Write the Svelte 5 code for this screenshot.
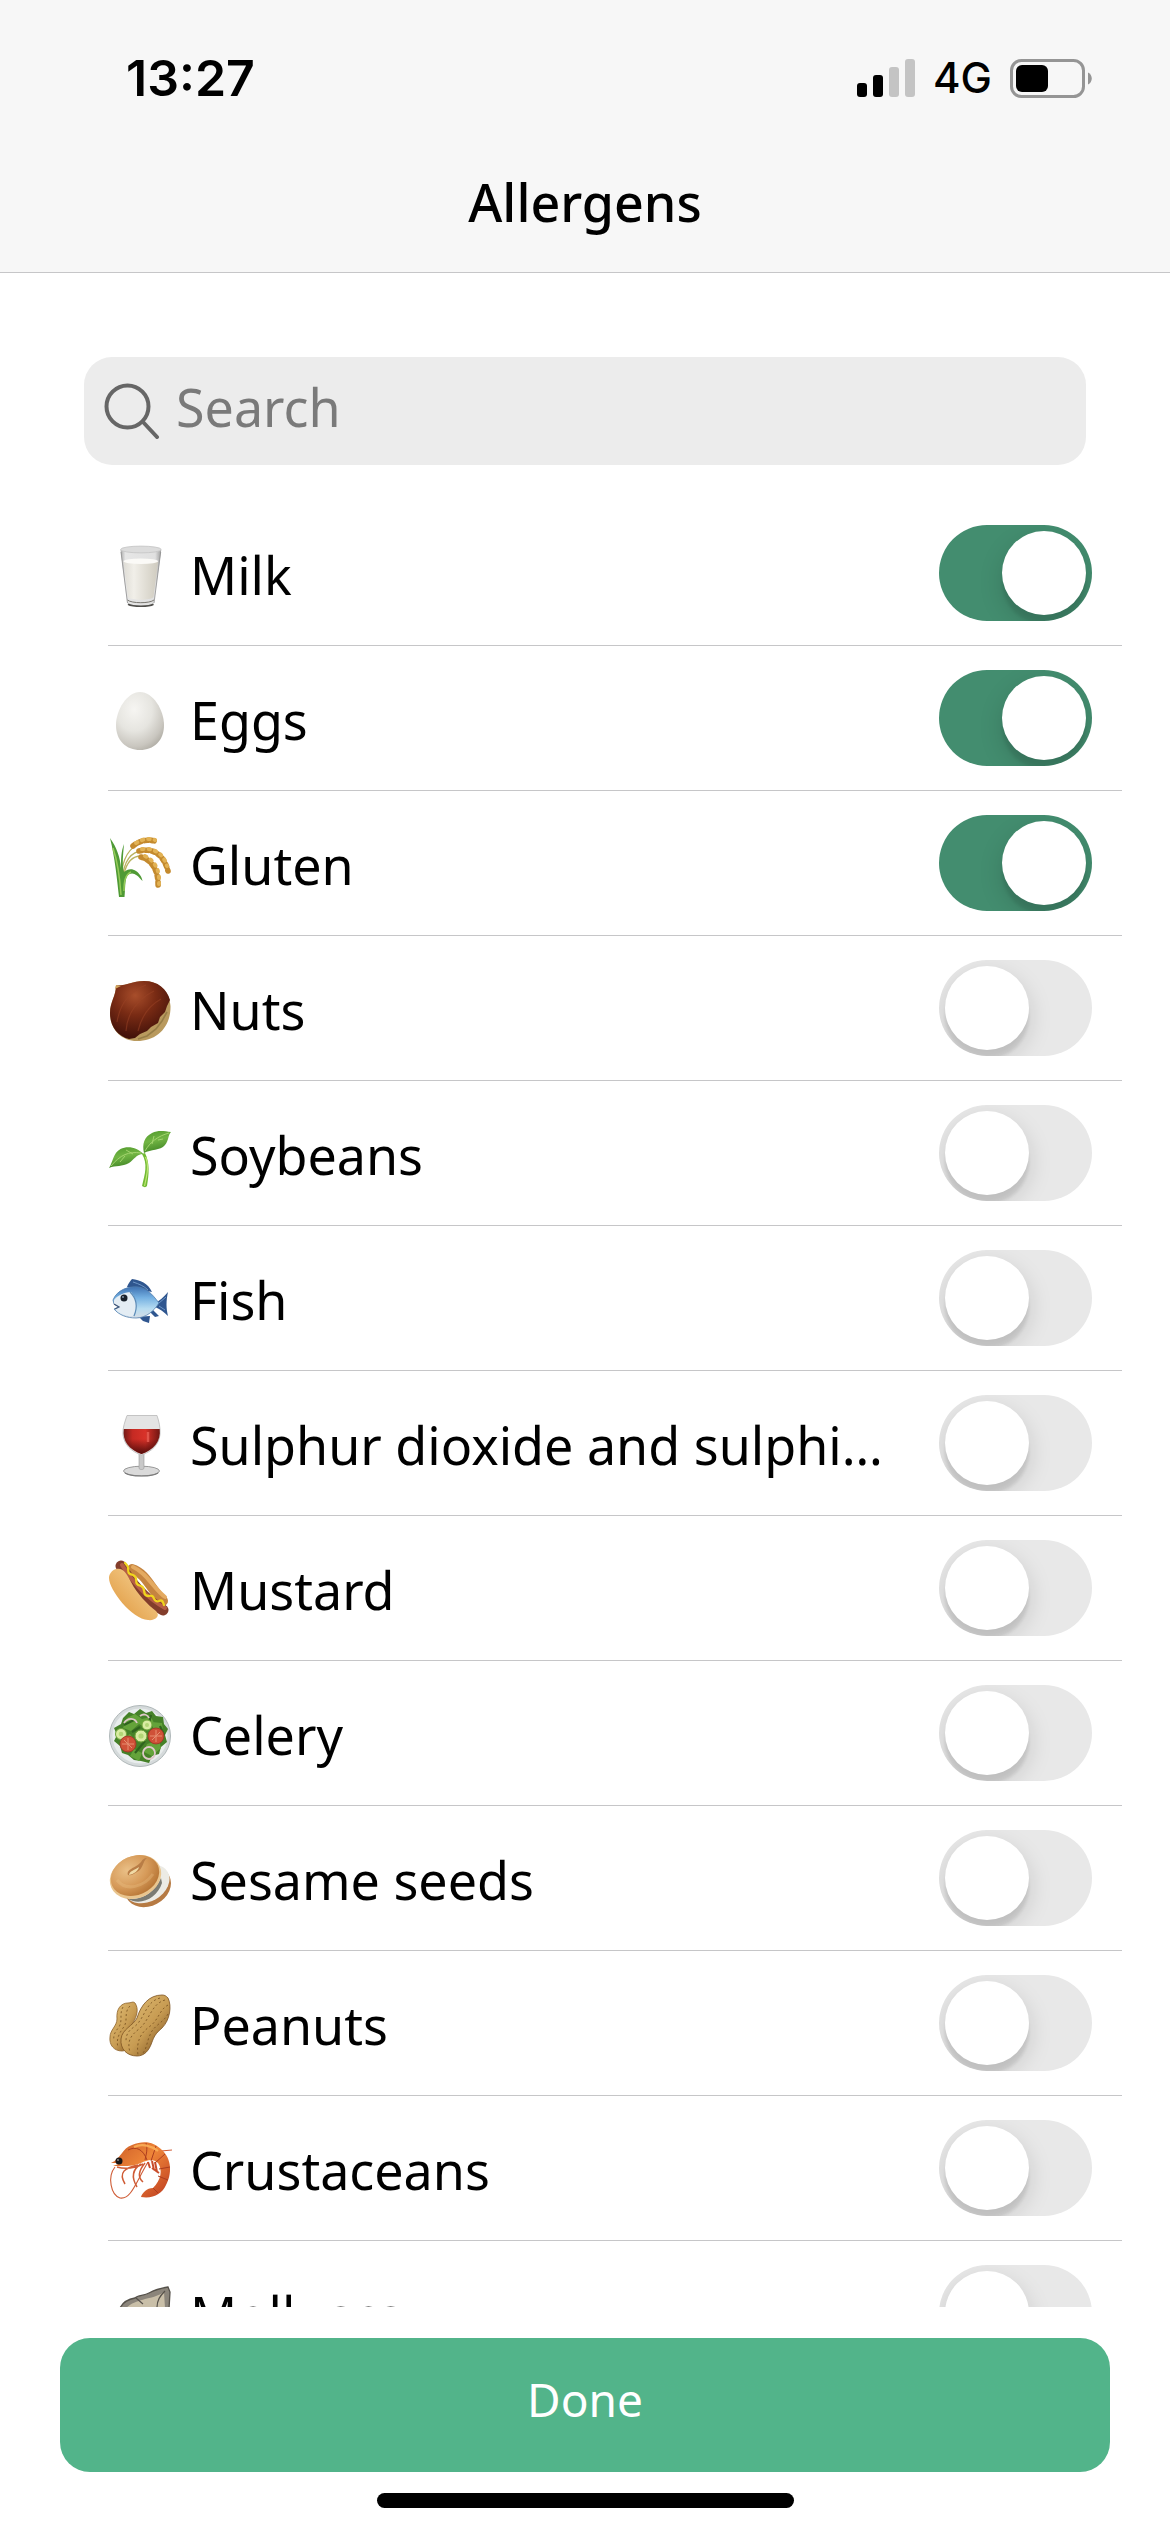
<script>
  let query = $state('');
  let allergens = $state([
    { id: 'milk', name: 'Milk', on: true },
    { id: 'eggs', name: 'Eggs', on: true },
    { id: 'gluten', name: 'Gluten', on: true },
    { id: 'nuts', name: 'Nuts', on: false },
    { id: 'soybeans', name: 'Soybeans', on: false },
    { id: 'fish', name: 'Fish', on: false },
    { id: 'sulphites', name: 'Sulphur dioxide and sulphites', on: false },
    { id: 'mustard', name: 'Mustard', on: false },
    { id: 'celery', name: 'Celery', on: false },
    { id: 'sesame', name: 'Sesame seeds', on: false },
    { id: 'peanuts', name: 'Peanuts', on: false },
    { id: 'crustaceans', name: 'Crustaceans', on: false },
    { id: 'molluscs', name: 'Molluscs', on: false }
  ]);
  let shown = $derived(
    allergens.filter((a) => a.name.toLowerCase().includes(query.trim().toLowerCase()))
  );
</script>

{#snippet picture(id)}
  <svg class="picture" viewBox="0 0 64 64" aria-hidden="true">
    {#if id === 'milk'}
      <defs>
        <linearGradient id="milk-glass" x1="0" x2="1">
          <stop offset="0" stop-color="#a9a9a9" /><stop offset=".12" stop-color="#e6e6e6" />
          <stop offset=".85" stop-color="#e0e0e0" /><stop offset="1" stop-color="#9d9d9d" />
        </linearGradient>
        <linearGradient id="milk-fill" x1="0" x2="1">
          <stop offset="0" stop-color="#dedcd5" /><stop offset=".3" stop-color="#f1efe9" />
          <stop offset="1" stop-color="#cfcbbf" />
        </linearGradient>
      </defs>
      <path d="M12.5 5.5 19 58.5c.6 5.2 26.4 5.2 27 0L53.3 5.5Z" fill="url(#milk-glass)" />
      <path d="M15.5 17.5 20 53c3 3.6 22.500 3.600 25.500 0l4.600-35.500Z" fill="url(#milk-fill)" />
      <ellipse cx="32.800" cy="17.300" rx="17.300" ry="2.800" fill="#fbfaf7" />
      <ellipse cx="32.900" cy="5.500" rx="20.300" ry="3.400" fill="#dcdcdc" stroke="#c4c4c4" stroke-width=".8" />
      <path d="M19.500 56c4 3.600 22.500 3.600 26.500 0" fill="none" stroke="#77756f" stroke-width="1" />
      <path d="M20 60.300c5 2.600 21 2.600 25.500 0" fill="none" stroke="#4f4e4b" stroke-width="1.600" />
      <path d="m13 8 6.500 51M52.700 8 46 59" stroke="#8e8e8e" stroke-width=".8" />
    {:else if id === 'eggs'}
      <defs>
        <radialGradient id="egg-shell" cx=".38" cy=".3" r=".75">
          <stop offset="0" stop-color="#f6f5f2" /><stop offset=".5" stop-color="#e6e5e0" />
          <stop offset=".85" stop-color="#c9c6bf" /><stop offset="1" stop-color="#b3b0a8" />
        </radialGradient>
      </defs>
      <path d="M32 3c13 0 24 18 24 33 0 16-10.500 25-24 25S8 52 8 36C8 21 19 3 32 3Z" fill="url(#egg-shell)" />
    {:else if id === 'gluten'}
      <g fill="none" stroke="#b9b25e" stroke-width="1.300">
        <path d="M13 42C15 24 22 13 32 10" /><path d="M15 45c0-17 8-28 20-28" /><path d="M16 40c3-13 9-18 17-18" />
      </g>
      <path d="M11 63C9 45 7 24 2 4c7 10 10 19 11 30 0-9 0-16 3-24-1 12-2 20 0 28 3-3 8-4 12-1 3 2 6 6 6.500 10-5-6-9-9-13-7-5 2-4 12-5 23Z" fill="#4f9a35" />
      <path d="M13 61C12 46 10 29 5 14M16 57c0-10 1-16 7-19" fill="none" stroke="#95ca59" stroke-width="1.500" />
      <g fill="none" stroke-linecap="round" stroke-width="5.600">
        <g stroke="#c48a2e" stroke-dasharray="3 3.500">
          <path d="M25 12c6-5 14-7 22-5" /><path d="M31 17c13-3 24 2 29 20" /><path d="M33 23c11 3 18 14 17 31" />
        </g>
        <g stroke="#e2b254" stroke-dasharray="1.500 5" stroke-width="4">
          <path d="M28 9c6-4 12-5 19-3" /><path d="M34 15c12-1 21 4 25 17" /><path d="M37 22c10 5 15 14 14 28" />
        </g>
      </g>
    {:else if id === 'nuts'}
      <defs>
        <radialGradient id="nut-shell" cx=".42" cy=".25" r=".75">
          <stop offset="0" stop-color="#a84e2b" /><stop offset=".45" stop-color="#792b14" />
          <stop offset="1" stop-color="#3f1009" />
        </radialGradient>
      </defs>
      <path d="M8 6.500C20 7 23 2 36 2c15 0 26 11 26.500 25C63 48 49 62 29 62 13 62 2 50 2 34 2 23 8 17 8 6.500Z" fill="#b99a5e" />
      <path d="M8 6.500C20 7 23 2 36 2c14 0 23 8 26 19l-3 6-2 6-5 5-2 6-7 4-4 4-7 3-5 4-6 1C9 57 2 47 2 34 2 23 8 17 8 6.500Z" fill="url(#nut-shell)" />
      <path d="M9 43C12 25 22 12 38 6M18 52C19 34 30 20 46 12M30 52c4-17 12-26 23-32" fill="none" stroke="#9b4326" stroke-width="1.200" opacity=".5" />
      <path d="m30 60 9-3 9-7 6-8 5-9" fill="none" stroke="#806a38" stroke-width="1.600" opacity=".6" />
      <path d="m7 10 1-4 5 1Z" fill="#d0a45f" />
    {:else if id === 'soybeans'}
      <defs>
        <linearGradient id="leaf" x1="0" y1="0" x2=".3" y2="1">
          <stop offset="0" stop-color="#4f982b" /><stop offset=".5" stop-color="#72b544" />
          <stop offset="1" stop-color="#438827" />
        </linearGradient>
      </defs>
      <path d="M34 30c6 10 3 20 0 32 2 1.500 4 1.500 5 0 2-12 3-23-2-33Z" fill="#72ba35" />
      <path d="M37.500 33c4 9 1 20-1 29" fill="none" stroke="#bde773" stroke-width="1.200" />
      <path d="M36 29c-2-9 0-16 8-20 6-3 12-2 19-1-3 3-2 8-6 13-5 6-14 4-21 8Z" fill="url(#leaf)" />
      <path d="M35.500 30c-6-6-15-9-23-5C5 29 5 38 1 44c7-3 13-1 20-5 5-3 7-9 14.500-9Z" fill="url(#leaf)" />
      <path d="M37 27c5-9 13-15 24-18M33 29c-12-2-21 2-30 13M44 20l2-8M50 16l5-1M25 30l-7-4M17 32l-5 6" fill="none" stroke="#a3d46e" stroke-width="1" />
    {:else if id === 'fish'}
      <defs>
        <linearGradient id="fish-body" x1="0" y1="0" x2="0" y2="1">
          <stop offset="0" stop-color="#3f72b2" /><stop offset=".35" stop-color="#75b1e2" />
          <stop offset=".7" stop-color="#b7dcf1" /><stop offset="1" stop-color="#d5dde5" />
        </linearGradient>
      </defs>
      <path d="M19 18c1-3 3-6 5-8 8 1 16 4 20 13ZM47 34c4-2 9-6 13-11-2 9-2 16 0 24-4-4-8-7-13-9ZM27 48l5 1 3 3 6 2 1-7ZM42 43l3-2 6 6-4 1Z" fill="#2f568f" />
      <path d="M5 31C9 21 20 17 30 18c9 1 14 7 21 16-5 8-13 15-23 15-9 0-17-3-22-9l5-2-5-3Z" fill="url(#fish-body)" stroke="#527fae" stroke-width=".8" />
      <path d="M6 31c3-4 10-8 17-8 7 9 7 18 2 24-7 1-15-3-18-7l5-2-6-3Z" fill="#e4edf4" />
      <path d="M22 23c8 8 7 17 4 24" fill="none" stroke="#5c8cb8" stroke-width="1.200" />
      <path d="m6 35 5 3-4 2" fill="none" stroke="#415779" stroke-width="1.200" />
      <path d="M25 13c6 2 11 4 15 8M51 34l7-6M51 37l6 4" fill="none" stroke="#6f97c7" stroke-width="1" />
      <circle cx="16" cy="29" r="3.500" fill="#18202a" /><circle cx="15" cy="28" r=".9" fill="#8da0b6" />
    {:else if id === 'sulphites'}
      <defs>
        <linearGradient id="wine" x1="0" x2="1">
          <stop offset="0" stop-color="#731a16" /><stop offset=".25" stop-color="#c52a23" />
          <stop offset=".6" stop-color="#d93229" /><stop offset="1" stop-color="#6f1511" />
        </linearGradient>
        <linearGradient id="wine-shade" x1="0" y1="0" x2="0" y2="1">
          <stop offset=".4" stop-color="#3a0505" stop-opacity="0" /><stop offset="1" stop-color="#3a0505" stop-opacity=".85" />
        </linearGradient>
      </defs>
      <ellipse cx="33.500" cy="57" rx="18" ry="4.800" fill="#dadada" stroke="#909090" stroke-width=".9" />
      <path d="M17 59c5 4 28 4 33 0" fill="none" stroke="#7c7c7c" stroke-width="1.200" />
      <path d="M31 38h5v16c0 2-5 2-5 0Z" fill="#c8c8c8" stroke="#999" stroke-width=".6" />
      <path d="M19 1.500h30c2 6 3.500 12 3 19-1 10-8 17-18.500 20.500C23 37.500 16 30.500 15 20.500c-.5-7 2-13 4-19Z" fill="#e4e4e4" stroke="#b9b9b9" stroke-width=".8" />
      <path d="M15.800 15h35.900c1.500 12-6 21-18.200 25C21.500 36 14 27 15.800 15Z" fill="url(#wine)" />
      <path d="M15.800 15h35.900c1.500 12-6 21-18.200 25C21.500 36 14 27 15.800 15Z" fill="url(#wine-shade)" />
      <path d="M40 18v10" stroke="#ef665b" stroke-width="2.500" opacity=".7" />
    {:else if id === 'mustard'}
      <defs>
        <linearGradient id="bun" x1="0" y1="1" x2=".7" y2=".3">
          <stop offset="0" stop-color="#b9702b" /><stop offset=".45" stop-color="#e6a957" />
          <stop offset="1" stop-color="#f1c580" />
        </linearGradient>
      </defs>
      <path d="M24 10C38 14 44 32 55 42" fill="none" stroke="#c58440" stroke-width="10" stroke-linecap="round" />
      <path d="M25 8C39 14 46 30 57 38" fill="none" stroke="#e4aa60" stroke-width="4" stroke-linecap="round" />
      <path d="M13 7c8 15 25 35 42 44" fill="none" stroke="#833d2b" stroke-width="11" stroke-linecap="round" />
      <path d="M14 6c10 16 25 33 43 43" fill="none" stroke="#b65e45" stroke-width="4" stroke-linecap="round" />
      <path d="M8 10c7-2 11 5 15 13 6 12 17 23 25 29 5 5-1 10-8 9C24 60 1 31 1 19c0-4 3-8 7-9Z" fill="url(#bun)" />
      <path d="M17 4c7 6-1 10 8 12 7 3-1 9 8 11 6 2 0 10 8 10 7-2 3 7 10 5 4-2 4 2 5 4" fill="none" stroke="#f0d51e" stroke-width="2.300" stroke-linecap="round" />
    {:else if id === 'celery'}
      <circle cx="32" cy="32" r="30.500" fill="#d5dadb" stroke="#b0b8b9" />
      <circle cx="32" cy="32" r="27.500" fill="#e9eded" />
      <path d="m15 14 6-6 5 2 6-5 6 4 6-2 4 5 7 1 1 7 4 5-3 6 2 7-6 5-2 7-7 2-3 7-8-2-7-1-6-5-6-2-2-7-6-5 3-6-3-7 7-4Z" fill="#458128" />
      <path d="m19 14 8-4 7 5 9-2 4 8-7 4-9-5-8 7-8-3ZM12 36l10-6 6 8-6 8-8-2ZM39 40l12-4 2 8-9 8-8-4ZM26 45l8 4-3 8-9-5ZM44 18l10 1 1 8-9 2Z" fill="#64a33a" />
      <path d="m24 28 8-5M27 49l10-12M52 22l4 9M16 21l10-5M43 11l-2 8" fill="none" stroke="#2f631e" stroke-width="2.200" />
      <g fill="#d9eca3" stroke="#6ea43a" stroke-width="1">
        <circle cx="13" cy="30" r="5.500" /><circle cx="33" cy="32" r="6" /><circle cx="39" cy="21" r="5" />
      </g>
      <g fill="#b3d676"><circle cx="13" cy="30" r="2.300" /><circle cx="33" cy="32" r="2.600" /><circle cx="39" cy="21" r="2" /></g>
      <g fill="#cf5138" stroke="#9f3324" stroke-width=".8"><circle cx="20" cy="40" r="8" /><circle cx="48" cy="32" r="8" /></g>
      <path d="M20 34v12M14 40h12M16 36l8 8M48 26v12M42 32h12M44 36l8-8" stroke="#eea081" stroke-width="1" opacity=".8" />
      <g fill="none" stroke="#dec8c8" stroke-width="1.800">
        <circle cx="41" cy="49" r="6" /><path d="M16 19c4-6 11-5 13 0M32 12c4-3 8-1 9 2" />
      </g>
    {:else if id === 'sesame'}
      <defs>
        <radialGradient id="bagel" cx=".4" cy=".3" r=".7">
          <stop offset="0" stop-color="#eac087" /><stop offset=".6" stop-color="#d69a59" />
          <stop offset="1" stop-color="#b97838" />
        </radialGradient>
      </defs>
      <ellipse cx="40" cy="38" rx="24" ry="19" transform="rotate(-28 40 38)" fill="#b67a43" />
      <ellipse cx="39" cy="35" rx="24" ry="17.500" transform="rotate(-30 39 35)" fill="#ecebe5" />
      <path d="M17 49c16 4 30-6 36-20l1 5C50 47 37 55 25 52Z" fill="#4c4b43" opacity=".7" />
      <ellipse cx="27.500" cy="28" rx="26.500" ry="21" transform="rotate(-24 27.500 28)" fill="#e9c58e" />
      <ellipse cx="27" cy="26.500" rx="25" ry="19.500" transform="rotate(-24 27 26.500)" fill="url(#bagel)" />
      <path d="M20 26c-2-6 8-7 13-13 2-3 3-4 6-4-5 4-3 10-10 14-4 2-5 4-9 3Z" fill="#b97d46" />
      <path d="M21 26c0-4 6-5 10-8-1 4-5 7-10 8Z" fill="#f1dba6" />
      <path d="M9 31c9 12 27 7 36-6" fill="none" stroke="#efc68c" stroke-width="3" opacity=".3" />
    {:else if id === 'peanuts'}
      <defs>
        <linearGradient id="peanut" x1="0" y1="0" x2="1" y2="1">
          <stop offset="0" stop-color="#e6c47c" /><stop offset=".55" stop-color="#c79b52" />
          <stop offset="1" stop-color="#6e4417" />
        </linearGradient>
      </defs>
      <path d="M27 9c4 6 2 13-2 20-3 5-1 9-2 15-1 8-4 13-9 13C6 57 1 51 2 43c0-7 7-11 7-18C8 15 13 9 20 9c3 0 5-2 7 0Z" fill="url(#peanut)" stroke="#8d6128" stroke-width=".8" />
      <path d="M60 4c4 8 2 22-6 30-7 6-8 9-10 14-3 9-8 14-15 14-10 0-17-7-16-17 1-10 12-13 16-21C33 11 41 1 54 1c3 0 4 1 6 3Z" fill="url(#peanut)" stroke="#7c5220" stroke-width=".8" />
      <g fill="none" stroke="#77501f" stroke-width="1" stroke-dasharray="2 2.500" opacity=".8">
        <path d="M57 6C43 10 42 26 31 35c-9 7-12 13-9 23" /><path d="M60 11c-9 5-9 15-19 22-8 6-13 14-11 28" />
        <path d="M52 4C37 8 37 25 26 33c-6 4-8 8-8 14" /><path d="M60 20c-5 9-15 12-18 21-3 6-3 13-7 18" />
        <path d="M22 12c-7 7-1 15-7 22-4 6-7 11-5 20M15 13c-4 7 0 13-4 20-4 5-6 8-5 14" />
      </g>
    {:else if id === 'crustaceans'}
      <defs>
        <linearGradient id="shrimp" x1="0" y1="0" x2="1" y2="1">
          <stop offset="0" stop-color="#c95a27" /><stop offset=".45" stop-color="#ee8538" />
          <stop offset="1" stop-color="#bd3b20" />
        </linearGradient>
      </defs>
      <g fill="none" stroke="#cf5c36" stroke-width="1.100">
        <path d="M7 28C-1 38 3 56 12 59c11 2 16-16 28-36" /><path d="M35 25c-10 5-19 5-26 3M30 26c-13 3-20 7-13 19M33 25c-8 5-10 13-4 23M37 24c-5 6-9 13-2 19" stroke-width="1.500" />
        <path d="M53 12l11-1" />
      </g>
      <g fill="none" stroke="#c94d2b" stroke-width="2"><path d="m40 23 2 6M44 22l2 9M47 23l2 10M44 29l7 5" /></g>
      <path d="M3 24C13 20 14 9 24 6 36 1 46 3 54 11c10 9 10 24 4 35-4 9-13 14-25 12 1-4 6-9 12-9 8-8 10-18 5-25-5-5-11-3-17 0-8 4-19 3-28 3l8-3Z" fill="url(#shrimp)" />
      <path d="M20 11c8-4 15-1 19 10M38 4c2 6 0 12-1 17M48 7l-5 15M57 15 47 24M62 28 51 30M60 41l-10-4M50 54l-5-5" fill="none" stroke="#ad3d1e" stroke-width="1" />
      <path d="M26 8c8-4 18-1 24 4" fill="none" stroke="#f8aa54" stroke-width="2.200" />
      <circle cx="11" cy="22" r="3.500" fill="#191615" /><circle cx="10" cy="21" r=".9" fill="#9b9692" />
    {:else}
      <path d="M12 24c3-6 9-9 15-10 3-3 9-2 14-5 7-4 13-5 19-6l2 5-1 17c-3 16-15 29-31 34-13 2-22-6-23-17Z" fill="#8b857b" stroke="#55514a" stroke-width="1.300" />
      <path d="M17 25c7-7 14-8 20-10 5-1 13-3 19-7l1 16c-4 13-15 25-27 28-9 1-16-7-13-27Z" fill="#c9bfa8" />
      <path d="M57 7c-5 5-8 9-8 17M28 14l7 6" fill="none" stroke="#57524b" stroke-width="1.200" />
    {/if}
  </svg>
{/snippet}

<div class="screen">
  <header class="top">
    <div class="status">
      <time class="clock">13:27</time>
      <div class="indicators">
        <svg class="signal" viewBox="0 0 58 38" role="img" aria-label="Signal: two of four bars">
          <rect x="0" y="24" width="10" height="14" rx="3" /><rect x="16" y="16" width="10" height="22" rx="3" />
          <rect x="32" y="8" width="10" height="30" rx="3" fill="#c4c4c4" /><rect x="48" y="0" width="10" height="38" rx="3" fill="#c4c4c4" />
        </svg>
        <span class="network">4G</span>
        <svg class="battery" viewBox="0 0 82 39" role="img" aria-label="Battery half full">
          <rect x="1.500" y="1.500" width="72" height="36" rx="10" fill="none" stroke="#959595" stroke-width="3" />
          <rect x="6" y="6" width="32" height="27" rx="6" />
          <path d="M78 13.500c5 2 5 10 0 12Z" fill="#959595" />
        </svg>
      </div>
    </div>
    <h1>Allergens</h1>
  </header>

  <main>
    <label class="search">
      <svg class="lens" viewBox="0 0 56 56" aria-hidden="true">
        <circle cx="23.500" cy="23.500" r="21" /><path d="m39 39 14 15" />
      </svg>
      <input type="search" placeholder="Search" aria-label="Search allergens" bind:value={query} />
    </label>

    <ul>
      {#each shown as item (item.id)}
        <li>
          {@render picture(item.id)}
          <label class="name" for={item.id}>{item.name}</label>
          <input class="switch" type="checkbox" role="switch" id={item.id} bind:checked={item.on} />
        </li>
      {/each}
    </ul>
  </main>

  <footer>
    <button type="button">Done</button>
    <div class="home"></div>
  </footer>
</div>

<style>
  :global(body) {
    margin: 0;
    background: #fff;
  }

  .screen {
    display: flex;
    flex-direction: column;
    height: 100vh;
    color: #000;
    font-family: 'Noto Sans', sans-serif;
    font-size: 52px;
    line-height: 72px;
  }

  .top {
    background: #f7f7f7;
    border-bottom: 1px solid #c6c6c8;
    padding-bottom: 34px;
  }

  .status {
    display: flex;
    justify-content: space-between;
    align-items: center;
    padding: 42px 78px 0 126px;
    font-family: Inter, sans-serif;
  }

  .clock {
    font-size: 50px;
    font-weight: 600;
  }

  .indicators {
    display: flex;
    align-items: center;
    gap: 18px;
  }

  .signal {
    width: 58px;
    height: 38px;
  }

  .network {
    font-size: 42px;
    font-weight: 500;
  }

  .battery {
    width: 82px;
    height: 39px;
  }

  h1 {
    margin: 52px 0 0;
    text-align: center;
    font-size: 52px;
    font-weight: 500;
  }

  main {
    flex: 1;
    min-height: 0;
    display: flex;
    flex-direction: column;
    gap: 36px;
    padding-top: 84px;
  }

  .search {
    display: flex;
    align-items: center;
    gap: 16px;
    height: 108px;
    flex: none;
    margin: 0 84px;
    padding: 0 20px;
    box-sizing: border-box;
    border-radius: 28px;
    background: #ececec;
  }

  .lens {
    flex: none;
    width: 56px;
    height: 56px;
    fill: none;
    stroke: #666;
    stroke-width: 4;
    stroke-linecap: round;
  }

  .search input {
    flex: 1;
    min-width: 0;
    height: 72px;
    margin: 0 0 8px;
    padding: 0;
    border: 0;
    outline: 0;
    background: none;
    color: #000;
    font: inherit;
    appearance: none;
  }

  .search input::placeholder {
    color: #7a7a7a;
    opacity: 1;
  }

  ul {
    flex: 1;
    min-height: 0;
    margin: 0;
    padding: 0 48px 0 108px;
    overflow-y: auto;
    scrollbar-width: none;
    list-style: none;
  }

  li {
    display: flex;
    align-items: center;
    gap: 18px;
    height: 144px;
    padding-right: 30px;
    border-bottom: 1px solid #c6c6c8;
  }

  .picture {
    flex: none;
    width: 64px;
    height: 64px;
    margin-top: 6px;
  }

  .name {
    flex: 1;
    min-width: 0;
    margin-right: 24px;
    padding-top: 4px;
    overflow: hidden;
    text-overflow: ellipsis;
    white-space: nowrap;
  }

  .switch {
    appearance: none;
    flex: none;
    width: 153px;
    height: 96px;
    margin: 0;
    padding: 6px;
    box-sizing: border-box;
    overflow: hidden;
    border-radius: 48px;
    background: #e8e8e8;
    cursor: pointer;
  }

  .switch::before {
    content: '';
    display: block;
    width: 84px;
    height: 84px;
    border-radius: 50%;
    background: #fff;
    box-shadow: 0 9px 24px rgb(0 0 0 / 15%), 0 9px 3px rgb(0 0 0 / 8%);
  }

  .switch:checked {
    background: #438d6f;
  }

  .switch:checked::before {
    margin-left: auto;
  }

  footer {
    display: flex;
    flex-direction: column;
    align-items: center;
    gap: 21px;
    padding: 31px 60px 24px;
  }

  button {
    width: 100%;
    height: 134px;
    padding: 0 0 12px;
    border: 0;
    border-radius: 30px;
    background: #52b48a;
    color: #fff;
    font: inherit;
    font-size: 46px;
    cursor: pointer;
  }

  .home {
    width: 417px;
    height: 15px;
    border-radius: 8px;
    background: #000;
  }
</style>
